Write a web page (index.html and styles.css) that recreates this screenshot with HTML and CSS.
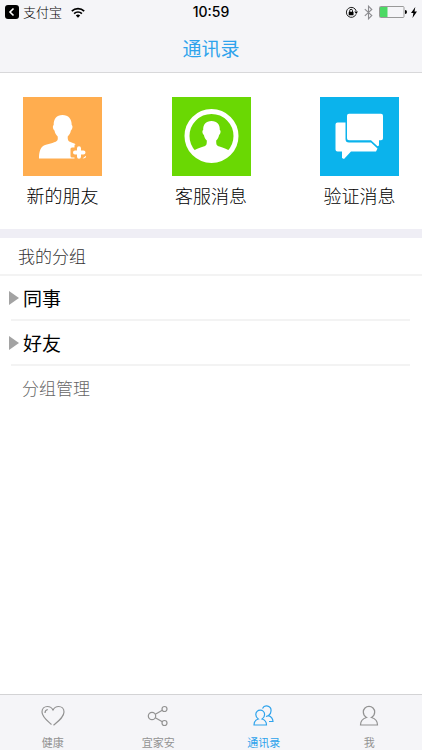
FILE: index.html
```html
<!DOCTYPE html>
<html lang="zh-CN">
<head>
<meta charset="utf-8">
<meta name="viewport" content="width=device-width, initial-scale=1">
<title>通讯录</title>
<link rel="stylesheet" href="styles.css">
</head>
<body>
<header class="header">
  <div class="status">
    <div class="status-side">
      <a class="back" href="#">
        <svg width="14" height="14" viewBox="0 0 14 14" aria-hidden="true"><rect width="14" height="14" rx="3" fill="#000"/><path d="M8.500 3.500 5 7l3.500 3.500" fill="none" stroke="#fff" stroke-width="1.600"/></svg>
        <span>支付宝</span>
      </a>
      <svg class="wifi" width="14" height="11" viewBox="0 0 14 11" aria-hidden="true"><g fill="none" stroke="#000" stroke-width="1.700"><path d="M.8 4.100a9 9 0 0 1 12.400 0"/><path d="M3.100 6.600a5.600 5.600 0 0 1 7.800 0"/></g><path d="M7 10.800 4.800 8.500a3.200 3.200 0 0 1 4.400 0z"/></svg>
    </div>
    <time class="clock">10:59</time>
    <div class="status-side status-end">
      <svg width="13" height="13" viewBox="0 0 13 13" aria-hidden="true"><path d="M11 8.300A5 5 0 1 1 11.200 5" fill="none" stroke="#222" stroke-width="1"/><path d="M9.300 5.500h3.700l-1.800 2.500z"/><rect x="3.700" y="5.700" width="4.800" height="3.600" rx=".4"/><path d="M4.700 6V4.700a1.400 1.400 0 0 1 2.800 0V6" fill="none" stroke="#000" stroke-width=".9"/></svg>
      <svg width="9" height="15" viewBox="0 0 9 15" aria-hidden="true"><path d="M.8 4.200 7.800 10.500 4.500 13.800V1.200L7.800 4.500.8 10.800" fill="none" stroke="#8c8c90" stroke-width="1.100"/></svg>
      <svg width="28" height="12" viewBox="0 0 28 12" aria-hidden="true"><rect x=".5" y=".5" width="24.500" height="11" rx="1" fill="none" stroke="#999"/><rect x="1" y="1" width="7.500" height="10" fill="#4cd964"/><path d="M26 4v4a2 2 0 0 0 0-4z"/></svg>
      <svg width="6" height="11" viewBox="0 0 6 11" aria-hidden="true"><path d="M4.300 0 0 6h2.400L1.500 11 6 4.600H3.500z"/></svg>
    </div>
  </div>
  <h1 class="title">通讯录</h1>
</header>

<main class="content">
  <nav class="shortcuts" aria-label="快捷入口">
    <a class="shortcut" href="#">
      <svg class="tile tile-orange" viewBox="0 0 79 79" aria-hidden="true">
        <path fill="#fff" d="M39.500 18c6 0 9.300 4 9.200 10 1.400.8.800 4.500-.8 5.400-.5 2.700-1.700 4.600-3.200 6 0 3.600.3 4.600 3.300 5.800 5.500 2 9.500 3.500 12 6.800L58 61.500H16c0-5 .7-10.500 4.500-12.800 4-2 10.500-2.400 13.500-5 1-.9.800-2.300.7-4.300-1.500-1.400-2.700-3.300-3.200-6-1.600-.9-2.200-4.600-.8-5.400C30.500 22 33.500 18 39.500 18z"/>
        <path d="M53 48.500h6v3.500h4v7h-4v4h-6v-4h-4v-7h4z" fill="#ffad4f" stroke="#ffad4f" stroke-width="3" stroke-linejoin="round"/>
        <path d="M56 51.200v8.600M52 55.500h8.500" fill="none" stroke="#fff" stroke-width="4" stroke-linecap="round"/>
        <path d="M59.500 61.500 63 58.800Q63.500 61.500 59.500 61.500z" fill="#fff"/>
      </svg>
      <span>新的朋友</span>
    </a>
    <a class="shortcut" href="#">
      <svg class="tile tile-green" viewBox="0 0 79 79" aria-hidden="true">
        <circle cx="39.500" cy="39" r="24.500" fill="none" stroke="#fff" stroke-width="5"/>
        <path fill="#fff" d="M39.500 24c5.700 0 8.500 3.600 8.300 9 1.400.7.800 4-.7 4.900-.5 2.500-1.500 4.300-2.900 5.600 0 4 .2 5 3.300 6.100 4 1.500 7.500 2.200 9.700 4.200C53 60.500 47 64 39.500 64S26 60.500 21.800 53.800c2.200-2 5.700-2.700 9.700-4.200 3.100-1.100 3.300-2.100 3.300-6.100-1.400-1.300-2.400-3.100-2.900-5.600-1.500-.9-2.100-4.200-.7-4.900-.2-5.400 2.600-9 8.300-9z"/>
      </svg>
      <span>客服消息</span>
    </a>
    <a class="shortcut" href="#">
      <svg class="tile tile-blue" viewBox="0 0 79 79" aria-hidden="true">
        <path fill="#fff" d="M17.500 25.500h8V42q0 3.500 3.500 3.500h22l6.500 6-1.500 3H31L24 62l-2-1v-6.500h-4.500q-2 0-2-2v-25q0-2 2-2z"/>
        <path fill="#fff" d="M29 16.700h32q2 0 2 2v22.500q0 2-2 2h-2v5.300l-1.500.8-6.500-6.100H29q-2 0-2-2V18.700q0-2 2-2z"/>
      </svg>
      <span>验证消息</span>
    </a>
  </nav>

  <section>
    <h2 class="section-title">我的分组</h2>
    <ul class="groups">
      <li><button class="group" type="button">同事</button></li>
      <li><button class="group" type="button">好友</button></li>
    </ul>
    <a class="manage" href="#">分组管理</a>
  </section>
</main>

<nav class="tabs" aria-label="主导航">
  <a class="tab" href="#">
    <svg width="24" height="22" viewBox="0 0 24 22" aria-hidden="true"><path d="M10.500 19.500C6 15.500 1 12 1 7c0-3.300 2.400-5.500 5.400-5.500C9 1.500 11 3 12 5c1-2 3-3.500 5.600-3.500C20.600 1.500 23 3.700 23 7c0 5-5.500 9-10.500 13.200M4 8c0-2 1-3.200 2.800-3.500"/></svg>
    <span>健康</span>
  </a>
  <a class="tab" href="#">
    <svg width="24" height="22" viewBox="0 0 24 22" aria-hidden="true"><circle cx="6" cy="11" r="3.700"/><circle cx="18.500" cy="4" r="2.500"/><circle cx="18.500" cy="18" r="2.500"/><path d="m9.300 9.200 7-4M9.300 12.800l7 4"/></svg>
    <span>宜家安</span>
  </a>
  <a class="tab active" href="#" aria-current="page">
    <svg width="24" height="22" viewBox="0 0 24 22" aria-hidden="true"><path d="M6.300 14C4.500 12.800 3.800 11 3.800 9.500a4.400 4.400 0 0 1 8.800 0c0 1.500-.7 3.300-2.500 4.500 2.500.8 4.400 3 4.400 6H2c0-3 1.800-5.200 4.300-6z"/><path d="M10.500 3.500A4.500 4.500 0 0 1 19 6c0 2-.8 3.600-2.500 4.600 2.600.9 4.300 3 4.500 5.900h-4M14 11.500l2.500-.9"/></svg>
    <span>通讯录</span>
  </a>
  <a class="tab" href="#">
    <svg width="24" height="22" viewBox="0 0 24 22" aria-hidden="true"><path d="M9.500 12.500C7.500 11.300 6.300 9.300 6.300 7a5.700 5.700 0 0 1 11.400 0c0 2.300-1.200 4.300-3.200 5.500 3.600 1 6 3.700 6 7.500h-17c0-3.800 2.400-6.500 6-7.500z"/></svg>
    <span>我</span>
  </a>
</nav>
</body>
</html>
```
FILE: styles.css
```css
* {
  box-sizing: border-box;
}

body {
  margin: 0;
  min-height: 100vh;
  display: flex;
  flex-direction: column;
  background: #fff;
  color: #000;
  font-family: "Noto Sans CJK SC", sans-serif;
  font-weight: 300;
}

a {
  color: inherit;
  text-decoration: none;
}

h1,
h2,
ul {
  margin: 0;
  padding: 0;
  font-weight: inherit;
  list-style: none;
}

svg {
  display: block;
  flex: none;
}

.header {
  background: #f5f5f8;
  border-bottom: 1px solid #d8d8da;
}

.status {
  display: flex;
  align-items: center;
  height: 24px;
  padding: 0 5px;
}

.status-side {
  flex: 1;
  display: flex;
  align-items: center;
  gap: 9px;
}

.status-end {
  justify-content: flex-end;
  gap: 6px;
}

.status-end svg:last-child {
  margin-left: -2px;
}

.back {
  display: flex;
  align-items: center;
  gap: 4px;
  font-size: 13px;
  line-height: 24px;
}

.clock {
  font: 500 14px/24px Inter, sans-serif;
}

.title {
  height: 48px;
  color: #2ea3ec;
  font-size: 19px;
  font-weight: 400;
  line-height: 48px;
  text-align: center;
}

.content {
  flex: 1;
}

.shortcuts {
  display: flex;
  justify-content: space-between;
  padding: 24px 23px 20px;
  border-bottom: 9px solid #efeef5;
}

.shortcut {
  display: flex;
  flex-direction: column;
  align-items: center;
  gap: 6px;
  font-size: 18px;
  line-height: 27px;
}

.tile {
  width: 79px;
  height: 79px;
}

.tile-orange {
  background: #ffad4f;
}

.tile-green {
  background: #6ad803;
}

.tile-blue {
  background: #0bb3ec;
}

.section-title {
  padding: 0 18px;
  border-bottom: 2px solid #f3f3f3;
  color: #333;
  font-size: 17px;
  line-height: 36px;
}

.groups {
  padding: 0 12px 0 11px;
}

.groups li {
  border-bottom: 2px solid #f3f3f3;
}

.group {
  display: flex;
  align-items: center;
  gap: 4px;
  width: 100%;
  margin-left: -2px;
  padding: 0;
  border: 0;
  background: none;
  color: #000;
  font: inherit;
  font-size: 19px;
  font-weight: 400;
  line-height: 43px;
  text-align: left;
}

.group::before {
  content: "";
  border-left: 10px solid #a3a3a3;
  border-top: 7px solid transparent;
  border-bottom: 7px solid transparent;
}

.manage {
  display: block;
  padding: 0 22px;
  color: #666;
  font-size: 17px;
  line-height: 44px;
}

.tabs {
  display: flex;
  height: 56px;
  background: #f5f5f8;
  border-top: 1px solid #d3d3d5;
}

.tab {
  flex: 1;
  display: flex;
  flex-direction: column;
  align-items: center;
  gap: 7px;
  padding-top: 10px;
  color: #929292;
  font-size: 11px;
  font-weight: 400;
  line-height: 16px;
}

.tab svg {
  fill: none;
  stroke: currentColor;
  stroke-width: 1.2;
}

.active {
  color: #2ea3ec;
}
```
